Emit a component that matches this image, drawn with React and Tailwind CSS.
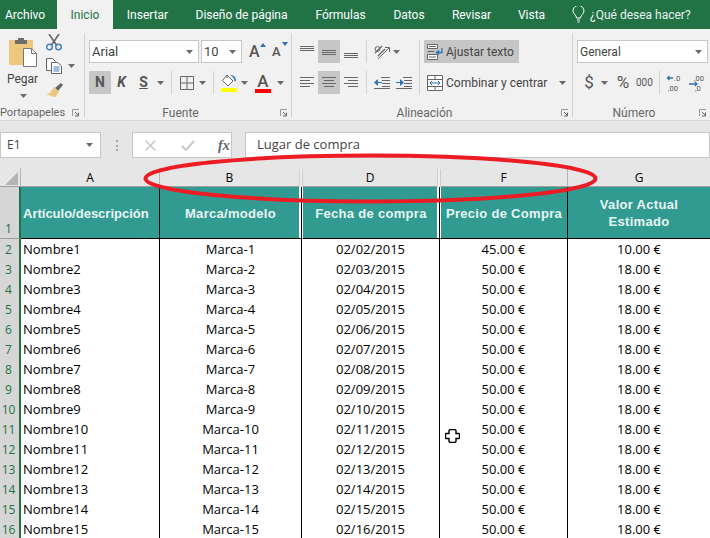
const rows = Array.from({ length: 15 }, (_, i) => ({
  row: i + 2,
  name: `Nombre${i + 1}`,
  brand: `Marca-${i + 1}`,
  date: `02/${String(i + 2).padStart(2, '0')}/2015`,
  price: i === 0 ? '45.00 €' : '50.00 €',
  value: i === 0 ? '10.00 €' : '18.00 €',
}));

const tabs = [
  ['Insertar', 'w-[39px]'],
  ['Diseño de página', 'w-[91px]'],
  ['Fórmulas', 'w-[49px]'],
  ['Datos', 'w-[30px]'],
  ['Revisar', 'w-[37px]'],
  ['Vista', 'w-[25px]'],
];

// flechita de los desplegables
const Caret = ({ className = '' }) => (
  <svg width="7" height="4" viewBox="0 0 7 4" className={`shrink-0 ${className}`}>
    <path d="M0 0h7L3.5 4z" fill="#6a6a6a" />
  </svg>
);

const Launcher = () => (
  <svg width="8" height="8" viewBox="0 0 8 8" className="shrink-0">
    <path d="M0.5 7V0.5H7" fill="none" stroke="#9a9a9a" />
    <path d="M3 3l3.5 3.5M6.5 3.5v3.5H3" fill="none" stroke="#666" />
  </svg>
);

const PasteIcon = () => (
  <svg width="29" height="30" viewBox="0 0 29 30">
    <path d="M0 3h24v25H1a1 1 0 0 1-1-1z" fill="#edc77f" />
    <path d="M6 3h3V1h6v2h3v4H6z" fill="#6d6d6d" />
    <path d="M14.5 11.5h8l5 5v13h-13z" fill="#fff" stroke="#777" />
    <path d="M22.5 11.5v5h5" fill="none" stroke="#777" />
  </svg>
);

const ScissorsIcon = () => (
  <svg width="16" height="17" viewBox="0 0 16 17">
    <path d="M3 0l7.5 11M13 0L5.5 11" stroke="#666" strokeWidth="1.6" fill="none" />
    <circle cx="3.5" cy="13" r="2.8" fill="none" stroke="#3f7fc1" strokeWidth="1.4" />
    <circle cx="12.5" cy="13" r="2.8" fill="none" stroke="#3f7fc1" strokeWidth="1.4" />
  </svg>
);

const CopyIcon = () => (
  <svg width="16" height="16" viewBox="0 0 16 16">
    <path d="M0.5 0.5h6l3 3v9h-9z" fill="#fff" stroke="#666" />
    <path d="M5.5 4.5h6l4 3.5v7.5h-10z" fill="#fff" stroke="#666" />
    <path d="M7.5 9h6M7.5 11h6M7.5 13h6" stroke="#3f7fc1" />
  </svg>
);

const BrushIcon = () => (
  <svg width="17" height="15" viewBox="0 0 17 15">
    <path d="M9 5l6-5 2 2-5 6z" fill="#666" />
    <path d="M8 4l5 5-4 5.5-9-3.5 4-1z" fill="#edc77f" />
  </svg>
);

const BordersIcon = () => (
  <svg width="14" height="14" viewBox="0 0 14 14">
    <path d="M0.5 0.5h13v13h-13zM7 0.5v13M0.5 7h13" fill="none" stroke="#666" />
  </svg>
);

const FillIcon = () => (
  <svg width="16" height="18" viewBox="0 0 16 18">
    <path d="M6 1l6 6-5 5-5.5-5.5z" fill="#fff" stroke="#666" />
    <path d="M6 1V4" stroke="#666" />
    <path d="M9 1c4 0 6 2 6 6-1 1-2 0-2-2-1-2-2-3-4-4z" fill="#3f7fc1" />
    <rect x="0" y="14" width="16" height="4" fill="#ffff00" />
  </svg>
);

const FontColorIcon = () => (
  <div className="w-[16px] flex flex-col items-center">
    <span className="font-medium text-[17px] leading-[16px] text-[#555]">A</span>
    <span className="w-[16px] h-[4px] bg-[#ff0000]" />
  </div>
);

// lineas de alineacion
const AlignLines = ({ align = 'left' }) => {
  const x = { left: [0, 14, 0, 10], center: [0, 14, 2, 10], right: [0, 14, 4, 10] }[align];
  return (
    <svg width="14" height="14" viewBox="0 0 14 14">
      <path
        d={`M${x[0]} 1.5h${x[1]}M${x[2]} 4.5h${x[3]}M${x[0]} 7.5h${x[1]}M${x[2]} 10.5h${x[3]}`}
        stroke="#666"
        fill="none"
      />
    </svg>
  );
};

const VAlign = ({ pos }) => {
  const y = { top: 1, middle: 5, bottom: 8 }[pos];
  return (
    <svg width="14" height="14" viewBox="0 0 14 14">
      <path d={`M0 ${y + 0.5}h14M0 ${y + 2.5}h14M0 ${y + 4.5}h14`} stroke="#666" fill="none" />
    </svg>
  );
};

const OrientationIcon = () => (
  <svg width="17" height="16" viewBox="0 0 17 16">
    <path d="M1 9l7-7M4 12l7-7" stroke="#666" strokeWidth="1.4" fill="none" />
    <circle cx="3.5" cy="5" r="2.4" fill="none" stroke="#666" />
    <path d="M4 15L15 4M11 3.5h4.5V8" stroke="#666" fill="none" />
  </svg>
);

const IndentIcon = ({ flip }) => (
  <svg width="16" height="12" viewBox="0 0 16 12">
    <path d="M7 0.5h9M8 3.5h8M8 6.5h8M8 9.5h8M0 11.5h16" stroke="#666" fill="none" />
    {flip ? (
      <path d="M0 5h4V2l4 3.5L4 9V6H0z" fill="#2f6fb3" />
    ) : (
      <path d="M8 5H4V2L0 5.5 4 9V6h4z" fill="#2f6fb3" />
    )}
  </svg>
);

const WrapIcon = () => (
  <svg width="16" height="16" viewBox="0 0 16 16">
    <path d="M0.5 0.5h10v4h-10zM0.5 10.5h10v5h-10z" fill="#fff" stroke="#666" />
    <path d="M0.5 7.5h7M2 2.5h7M2 13h7" stroke="#666" fill="none" />
    <path d="M15 4v4.5H10M12 6.5l-2.5 2 2.5 2" stroke="#2f6fb3" strokeWidth="1.3" fill="none" />
  </svg>
);

const MergeIcon = () => (
  <svg width="16" height="16" viewBox="0 0 16 16">
    <path d="M0.5 0.5h15v15h-15zM0.5 4.5h15M0.5 11.5h15M8 0.5v4M8 11.5v4" fill="#fff" stroke="#666" />
    <path d="M3 8h10M5 6L3 8l2 2M11 6l2 2-2 2" stroke="#2f6fb3" fill="none" />
  </svg>
);

const DecimalIcon = ({ more }) => (
  <svg width="17" height="20" viewBox="0 0 17 20">
    <text x={more ? 8 : 6} y="8" fontSize="7.5" fill="#555" fontFamily="Roboto, sans-serif">{more ? '.0' : ',00'}</text>
    <text x={more ? 2 : 7} y="18" fontSize="7.5" fill="#555" fontFamily="Roboto, sans-serif">{more ? ',00' : ',0'}</text>
    {more ? (
      <path d="M7 5H1M3.5 3L1.5 5l2 2" stroke="#2f6fb3" strokeWidth="1.3" fill="none" />
    ) : (
      <path d="M1 11h8M7 9l2 2-2 2" stroke="#2f6fb3" strokeWidth="1.3" fill="none" />
    )}
  </svg>
);

const Bulb = () => (
  <svg width="13" height="17" viewBox="0 0 13 17">
    <path d="M4.5 12c0-3-3.5-4-3.5-7a5.5 5.5 0 0 1 11 0c0 3-3.5 4-3.5 7zM5 14h3M5.5 16h2" fill="none" stroke="#fff" />
  </svg>
);

const Group = ({ label, className, children }) => (
  <div className={`h-[84px] shrink-0 border-r border-[#d2d2d2] pt-[7px] flex flex-col ${className}`}>
    {children}
    <div className="mt-auto mb-[-3px] grid grid-cols-[1fr_auto_1fr] items-center h-[14px] text-[12px] leading-[14px] text-[#666] pr-[3px]">
      <span />
      <span className="mr-[16px]">{label}</span>
      <span className="justify-self-end"><Launcher /></span>
    </div>
  </div>
);

const Separator = ({ className = '' }) => <div className={`w-px h-[23px] bg-[#d2d2d2] shrink-0 ${className}`} />;

const Ribbon = () => (
  <div className="flex h-[92px] pt-[4px] bg-[#f1f1f1] border-b border-[#d6d6d6] text-[#444] font-['Roboto',sans-serif]">
    {/* Portapapeles */}
    <div className="w-[85px] h-[84px] shrink-0 border-r border-[#d2d2d2] flex flex-col">
      <div className="flex">
        <div className="w-[44px] flex flex-col items-center pt-[4px] pl-[2px]">
          <PasteIcon />
          <span className="text-[12px] leading-[16px] mt-[4px] mr-[1px]">Pegar</span>
          <Caret className="mt-[7px]" />
        </div>
        <div className="flex flex-col items-start pl-[2px] pt-[1px]">
          <ScissorsIcon />
          <div className="flex items-center mt-[7px]">
            <CopyIcon />
            <Caret className="ml-[6px]" />
          </div>
          <div className="mt-[9px]"><BrushIcon /></div>
        </div>
      </div>
      <div className="mt-auto mb-[-3px] flex items-center h-[14px] text-[11px] leading-[14px] text-[#666] pr-[4px]">
        <span>Portapapeles</span>
        <span className="ml-auto"><Launcher /></span>
      </div>
    </div>

    {/* Fuente */}
    <Group label="Fuente" className="w-[207px] pl-[4px]">
      <div className="flex items-center h-[23px]">
        <div className="w-[110px] h-[23px] bg-white border border-[#c6c6c6] flex items-center justify-between pl-[2px] pr-[5px] text-[13px]">
          Arial <Caret />
        </div>
        <div className="w-[41px] ml-[2px] h-[23px] bg-white border border-[#c6c6c6] flex items-center justify-between pl-[2px] pr-[5px] text-[13px]">
          10 <Caret />
        </div>
        <div className="w-[14px] ml-[7px] relative text-[16px] leading-[16px] text-[#555] font-medium">
          A
          <svg width="6" height="4" viewBox="0 0 6 4" className="absolute right-[-3px] top-[-1px]"><path d="M0 4h6L3 0z" fill="#2f6fb3" /></svg>
        </div>
        <div className="w-[13px] ml-[9px] relative text-[13px] leading-[16px] text-[#555] font-medium">
          A
          <svg width="6" height="4" viewBox="0 0 6 4" className="absolute right-[-3px] top-[-2px]"><path d="M0 0h6L3 4z" fill="#2f6fb3" /></svg>
        </div>
      </div>
      <div className="flex items-center h-[23px] mt-[8px]">
        <div className="w-[22px] h-[23px] bg-[#c6c6c6] flex items-center justify-center text-[14px] font-bold text-[#555]">N</div>
        <div className="w-[21px] text-center text-[14px] font-bold italic text-[#555]">K</div>
        <div className="w-[23px] text-center text-[14px] font-bold underline text-[#555]">S</div>
        <div className="w-[11px] flex justify-center"><Caret /></div>
        <Separator className="ml-[5px]" />
        <div className="ml-[8px]"><BordersIcon /></div>
        <Caret className="ml-[5px]" />
        <Separator className="ml-[7px]" />
        <div className="ml-[7px]"><FillIcon /></div>
        <Caret className="ml-[4px]" />
        <div className="ml-[7px]"><FontColorIcon /></div>
        <Caret className="ml-[6px]" />
      </div>
    </Group>

    {/* Alineacion */}
    <Group label="Alineación" className="w-[281px] pl-[4px]">
      <div className="flex">
        <div>
          <div className="flex items-center h-[23px]">
            <div className="w-[22px] h-[23px] flex items-center justify-center"><VAlign pos="top" /></div>
            <div className="w-[22px] h-[23px] flex items-center justify-center bg-[#c6c6c6]"><VAlign pos="middle" /></div>
            <div className="w-[22px] h-[23px] flex items-center justify-center"><VAlign pos="bottom" /></div>
            <Separator className="ml-[4px]" />
            <div className="ml-[7px]"><OrientationIcon /></div>
            <Caret className="ml-[2px]" />
          </div>
          <div className="flex items-center h-[23px] mt-[8px]">
            <div className="w-[22px] h-[23px] flex items-center justify-center"><AlignLines align="left" /></div>
            <div className="w-[22px] h-[23px] flex items-center justify-center bg-[#c6c6c6]"><AlignLines align="center" /></div>
            <div className="w-[22px] h-[23px] flex items-center justify-center"><AlignLines align="right" /></div>
            <Separator className="ml-[4px]" />
            <div className="ml-[7px]"><IndentIcon /></div>
            <div className="ml-[6px]"><IndentIcon flip /></div>
          </div>
        </div>
        <div className="w-px h-[55px] bg-[#d2d2d2] shrink-0 ml-[7px]" />
        <div className="pl-[4px]">
          <div className="w-[95px] h-[23px] bg-[#c6c6c6] flex items-center pl-[3px] text-[12px]">
            <WrapIcon />
            <span className="ml-[3px] whitespace-nowrap">Ajustar texto</span>
          </div>
          <div className="h-[23px] mt-[8px] flex items-center pl-[3px] text-[12px]">
            <MergeIcon />
            <span className="ml-[3px] w-[102px] whitespace-nowrap">Combinar y centrar</span>
            <Caret className="ml-[11px]" />
          </div>
        </div>
      </div>
    </Group>

    {/* Numero */}
    <Group label="Número" className="w-[137px] pl-[4px] border-r-0">
      <div className="w-[131px] h-[23px] bg-white border border-[#c6c6c6] flex items-center justify-between pl-[2px] pr-[5px] text-[12px]">
        General <Caret />
      </div>
      <div className="flex items-center h-[23px] mt-[8px] text-[#555]">
        <span className="w-[12px] ml-[6px] text-center text-[17px] leading-[23px]">$</span>
        <Caret className="ml-[6px]" />
        <span className="w-[14px] ml-[8px] text-center text-[17px] leading-[23px]">%</span>
        <span className="w-[16px] ml-[6px] text-center text-[10px] leading-[23px]">000</span>
        <Separator className="ml-[7px]" />
        <div className="ml-[6px]"><DecimalIcon more /></div>
        <div className="ml-[5px]"><DecimalIcon /></div>
      </div>
    </Group>
  </div>
);

const FormulaBar = () => (
  <div className="flex h-[47px] pt-[11px] pb-[10px] bg-[#e6e6e6] text-[#444]">
    <div className="w-[101px] bg-white border border-[#c6c6c6] flex items-center justify-between pl-[6px] pr-[7px] text-[12px]">
      E1 <Caret />
    </div>
    <div className="w-[31px] flex items-center justify-center">
      <div className="w-[2px] h-[11px] border-l-2 border-dotted border-[#a8a8a8]" />
    </div>
    <div className="w-[100px] bg-white border border-[#c6c6c6] flex items-center">
      <svg width="11" height="11" viewBox="0 0 11 11" className="ml-[12px]"><path d="M0.5 0.5l10 10M10.5 0.5l-10 10" stroke="#c8c8c8" strokeWidth="1.5" /></svg>
      <svg width="14" height="11" viewBox="0 0 14 11" className="ml-[25px]"><path d="M1 6l4 4 8-9" stroke="#c8c8c8" strokeWidth="2" fill="none" /></svg>
      <span className="ml-[23px] text-[14px] italic font-bold text-[#666] font-['Liberation_Serif',serif]">fx</span>
    </div>
    <div className="w-[13px]" />
    <div className="flex-1 bg-white border border-[#c6c6c6] flex items-center pl-[11px] text-[13px]">Lugar de compra</div>
  </div>
);

const gridCols = 'grid grid-cols-[21px_139px_142px_138px_128px_142px]';

const Handle = () => (
  <div className="w-[4px] h-[18px] mr-[-1px] bg-gradient-to-r from-[#bdbdbd] via-white to-[#bdbdbd]" />
);

const ColumnHeaders = () => (
  <div className={`${gridCols} h-[19px] bg-[#e6e6e6] text-black text-[12px] border-b border-[#9f9f9f]`}>
    <div className="border-r border-[#b4b4b4] pl-[5px] pt-[4px]">
      <svg width="13" height="13" viewBox="0 0 13 13"><path d="M13 0v13H0z" fill="#b4b4b4" /></svg>
    </div>
    <div className="border-r border-[#b4b4b4] text-center leading-[20px]">A</div>
    <div className="flex items-center leading-[20px]">
      <span className="flex-1 text-center">B</span>
      <Handle />
    </div>
    <div className="flex items-center leading-[20px]">
      <span className="flex-1 text-center pl-[1px]">D</span>
      <Handle />
    </div>
    <div className="border-r border-[#b4b4b4] text-center leading-[20px]">F</div>
    <div className="text-center leading-[20px]">G</div>
  </div>
);

const HeaderCell = ({ className = '', children }) => (
  <div
    className={`bg-[#319b92] border-b border-black flex items-center justify-center text-center text-[13px] font-bold leading-[17px] text-[#e9f5f3] font-['Liberation_Sans',sans-serif] ${className}`}
  >
    {children}
  </div>
);

const Sheet = () => (
  <div>
    <div className={`${gridCols} h-[52px]`}>
      <div className="bg-[#d6d6d6] border-r-2 border-[#217346] border-b border-b-[#9f9f9f] flex items-end pl-[5px] text-[12px] text-[#217346]">1</div>
      <HeaderCell className="justify-start pl-[2px] pt-[2px] border-r border-r-black">Artículo/descripción</HeaderCell>
      <HeaderCell className="tracking-[0.3px] pt-[2px] border-r border-r-black shadow-[inset_-2px_0_0_#ffffff]">Marca/modelo</HeaderCell>
      <HeaderCell className="tracking-[0.3px] pt-[2px] border-l border-l-white border-r border-r-black shadow-[inset_-2px_0_0_#ffffff]">Fecha de compra</HeaderCell>
      <HeaderCell className="tracking-[0.3px] pt-[2px] border-l border-l-white border-r border-r-black">Precio de Compra</HeaderCell>
      <HeaderCell className="tracking-[0.3px]">Valor Actual<br />Estimado</HeaderCell>
    </div>
    {rows.map((r) => (
      <div key={r.row} className={`${gridCols} h-[20px] text-[13px] leading-[21px] text-black`}>
        <div className="bg-[#d6d6d6] border-r-2 border-[#217346] border-b border-b-[#9f9f9f] text-center pr-[2px] text-[12px] text-[#217346]">{r.row}</div>
        <div className="pl-[2px] border-r border-b border-black bg-white">{r.name}</div>
        <div className="text-center border-r border-b border-black bg-white">{r.brand}</div>
        <div className="text-center border-r border-b border-black bg-white">{r.date}</div>
        <div className="text-center border-r border-b border-black bg-white">{r.price}</div>
        <div className="text-center border-b border-black bg-white">{r.value}</div>
      </div>
    ))}
  </div>
);

const App = () => (
  <div className="relative w-[710px] h-[538px] overflow-hidden bg-white font-['Open_Sans',sans-serif]">
    {/* pestañas */}
    <div className="flex items-center h-[29px] bg-[#217346] text-white text-[12px] font-['Roboto',sans-serif]">
      <div className="w-[57px] pl-[5px]">Archivo</div>
      <div className="w-[56px] h-[29px] bg-[#f1f1f1] text-[#217346] flex items-center justify-center">Inicio</div>
      <div className="flex gap-[29px] ml-[15px]">
        {tabs.map(([name, width]) => (
          <div key={name} className={`${width} whitespace-nowrap flex justify-center`}>{name}</div>
        ))}
      </div>
      <div className="flex items-center ml-[28px] text-[#e8f1ec]">
        <Bulb />
        <span className="ml-[5px] whitespace-nowrap">¿Qué desea hacer?</span>
      </div>
    </div>

    <Ribbon />
    <FormulaBar />
    <ColumnHeaders />
    <Sheet />

    {/* ovalo rojo encima de las columnas */}
    <svg width="710" height="60" viewBox="0 0 710 60" className="absolute left-0 top-[150px] pointer-events-none">
      <ellipse cx="370.5" cy="28.5" rx="225" ry="23" fill="none" stroke="#ed1c24" strokeWidth="4" />
    </svg>

    {/* cursor de excel */}
    <svg width="15" height="14" viewBox="0 0 15 14" className="absolute left-[444.5px] top-[429px] pointer-events-none">
      <path d="M5 0.5h5l1 1v3h3l.5.5v4l-.5.5h-3v3l-1 1H5l-1-1v-3H1l-.5-.5V5L1 4.5h3v-3z" fill="#fff" stroke="#000" strokeWidth="1.4" />
    </svg>
  </div>
);

export default App;
